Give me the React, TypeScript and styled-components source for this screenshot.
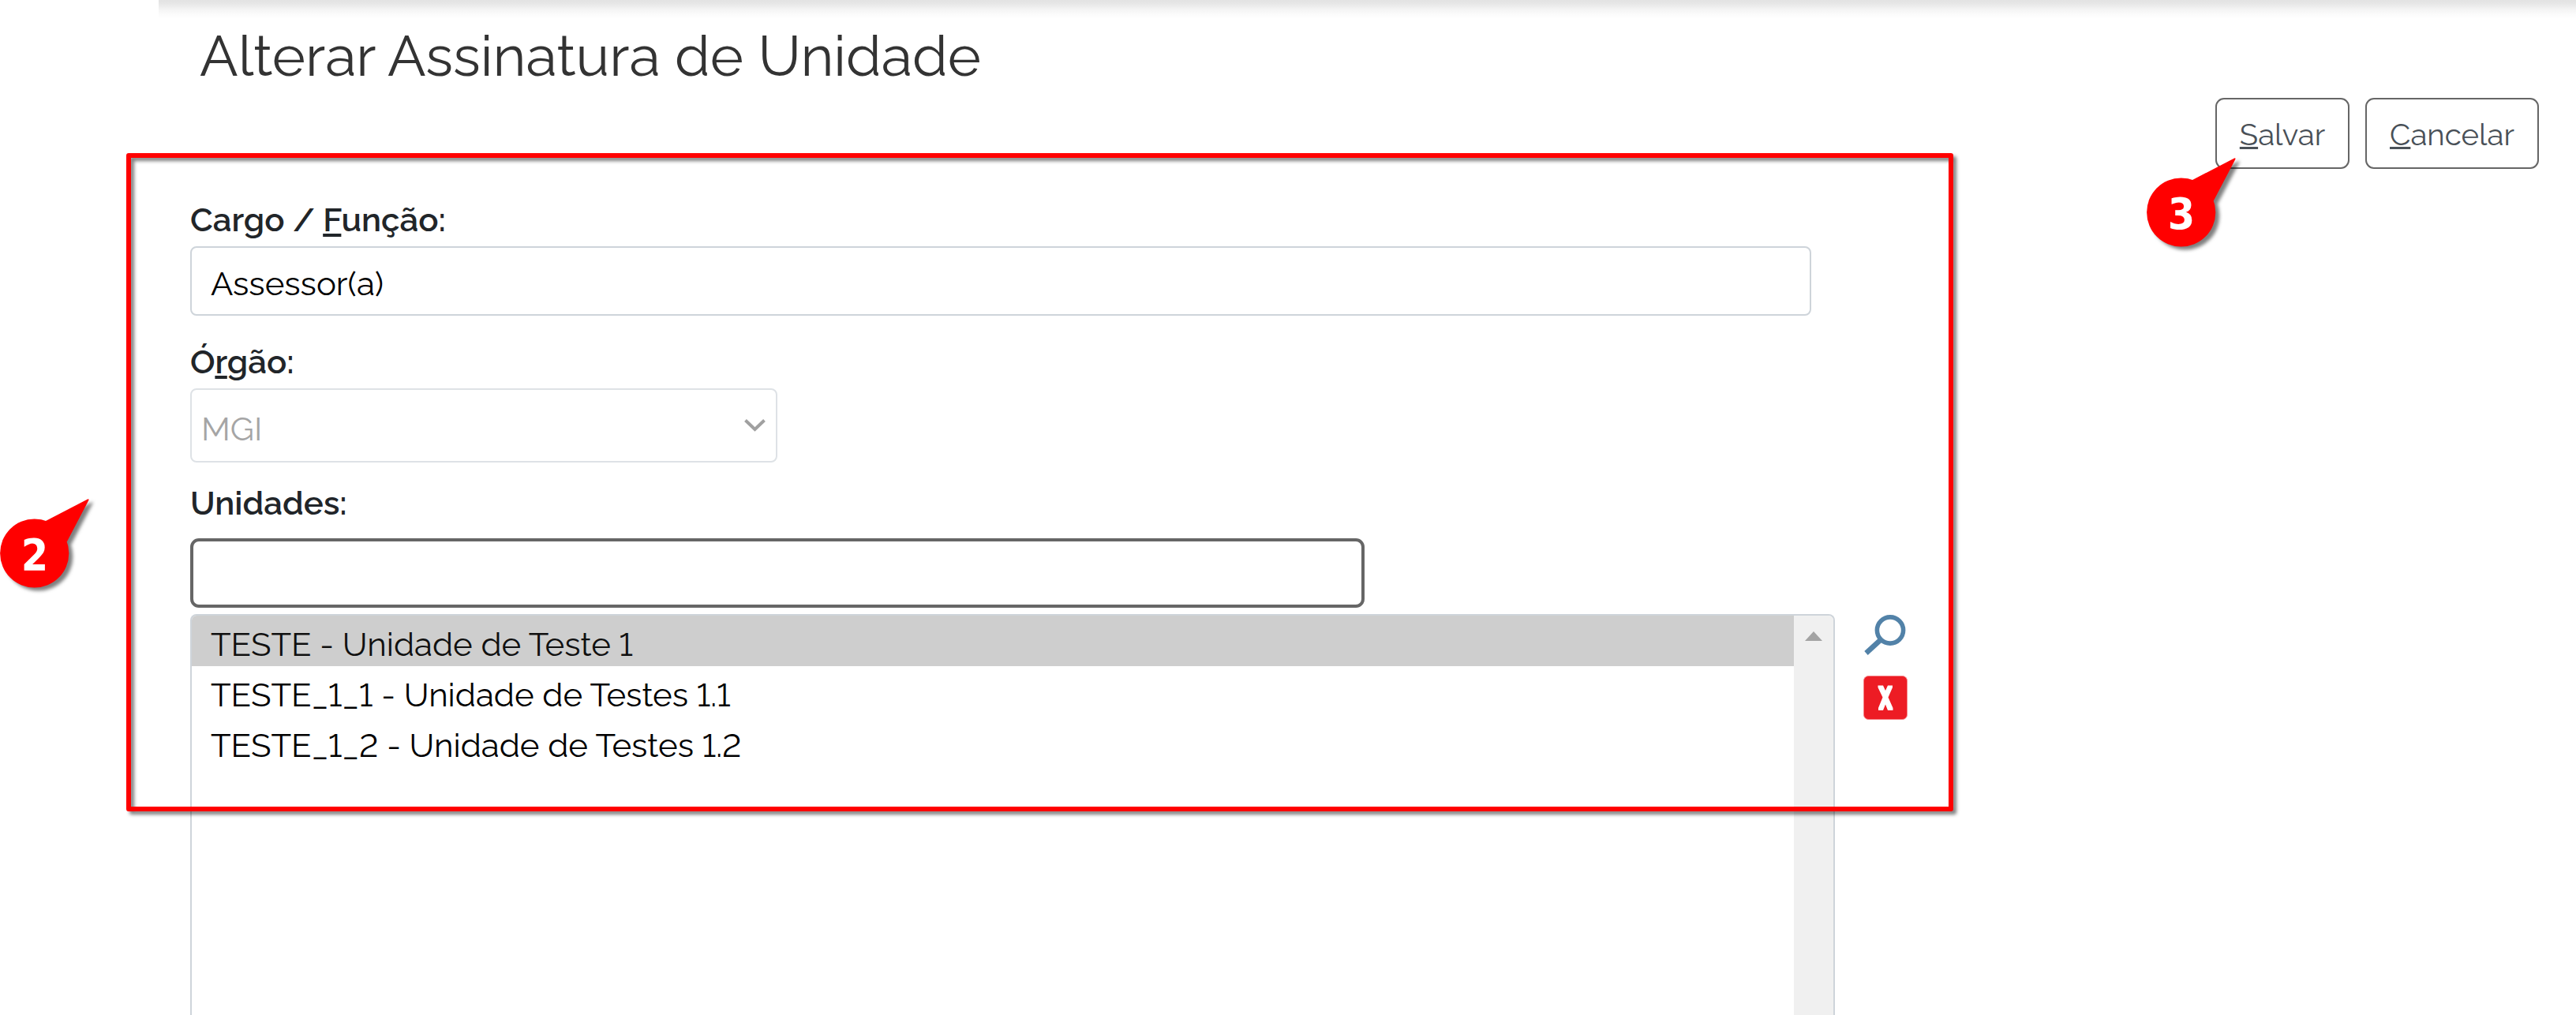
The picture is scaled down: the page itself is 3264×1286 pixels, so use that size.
import React from 'react';
import styled, { createGlobalStyle } from 'styled-components';

const GlobalStyle = createGlobalStyle`
  *, *::before, *::after { box-sizing: border-box; }
  body { margin: 0; background: #fff; }
`;

const Page = styled.main`
  position: relative;
  display: flex;
  flex-direction: column;
  width: 3264px;
  height: 1286px;
  overflow: hidden;
  background: #fff;
  font-family: Raleway, Lato, 'Open Sans', sans-serif;
  font-variant-numeric: lining-nums;
  color: #212529;
`;

const TopShadow = styled.div`
  flex: none;
  height: 24px;
  margin-left: 201px;
  background: linear-gradient(#e3e3e3 0, #e6e6e6 4px, #f4f4f4 12px, #fcfcfc 19px, #fff 24px);
`;

const Title = styled.h1`
  flex: none;
  margin: 5px 0 0 253px;
  font-size: 72px;
  font-weight: 400;
  line-height: 84px;
  white-space: nowrap;
  color: #333;
`;

const Actions = styled.div`
  flex: none;
  display: flex;
  justify-content: flex-end;
  gap: 20px;
  margin-top: 11px;
  padding-right: 47px;
`;

const ActionButton = styled.button<{ $width: number }>`
  width: ${p => p.$width}px;
  height: 90px;
  padding: 3px 0 0;
  border: 2px solid #666;
  border-radius: 11px;
  background: #fff;
  font-family: inherit;
  font-size: 38.4px;
  text-align: center;
  color: #495057;
`;

const Key = styled.span`
  text-decoration: underline;
  text-decoration-skip-ink: none;
`;

const Form = styled.form`
  flex: 1;
  min-height: 0;
  display: flex;
  flex-direction: column;
  padding: 40px 0 0 241px;
`;

const Field = styled.div<{ $after: number }>`
  display: flex;
  flex-direction: column;
  gap: 8px;
  margin-bottom: ${p => p.$after}px;
`;

const Label = styled.label`
  font-size: 42px;
  font-weight: 600;
  line-height: 50px;
  white-space: nowrap;
`;

const TextInput = styled.input`
  width: 2054px;
  height: 88px;
  padding: 6px 25px 0 24px;
  border: 2px solid #ced4da;
  border-radius: 8px;
  outline: none;
  background: #fff;
  font-family: inherit;
  font-size: 42px;
  color: #000;
`;

const SearchInput = styled(TextInput)`
  width: 1488px;
  margin-top: 11px;
  border: 4px solid #666;
  border-radius: 11px;
`;

const Select = styled.div`
  display: flex;
  align-items: center;
  justify-content: space-between;
  width: 744px;
  height: 94px;
  padding: 0 12px;
  border: 2px solid #dee2e6;
  border-radius: 8px;
  font-size: 42px;
  color: #a5a5a5;
`;

const SelectValue = styled.span`
  padding-top: 8px;
`;

const ListRow = styled.div`
  flex: 1;
  min-height: 0;
  display: flex;
  gap: 36px;
`;

const ListBox = styled.div`
  display: flex;
  width: 2084px;
  border: 2px solid #ced4da;
  border-bottom: 0;
  border-radius: 8px 8px 0 0;
  overflow: hidden;
`;

const Options = styled.ul`
  flex: 1;
  margin: 0;
  padding: 0;
  list-style: none;
`;

const Option = styled.li<{ $selected?: boolean }>`
  height: 64px;
  padding: 9px 0 0 24px;
  font-size: 42px;
  line-height: 56px;
  white-space: nowrap;
  color: ${p => (p.$selected ? '#101010' : '#000')};
  background: ${p => (p.$selected ? '#cecece' : 'transparent')};
`;

const Scrollbar = styled.div`
  display: flex;
  justify-content: center;
  width: 50px;
  padding-top: 20px;
  background: #f0f0f0;
`;

const ListTools = styled.div`
  display: flex;
  flex-direction: column;
  gap: 24px;
`;

const Frame = styled.div`
  position: absolute;
  left: 160px;
  top: 194px;
  width: 2315px;
  height: 834px;
  border: 6px solid #f00;
  border-radius: 3px;
  filter: drop-shadow(4px 4px 2px rgba(0, 0, 0, 0.5));
  pointer-events: none;
`;

const Callout = styled.div<{ $x: number; $y: number }>`
  position: absolute;
  left: ${p => p.$x}px;
  top: ${p => p.$y}px;
  width: 114px;
  height: 113px;
  filter: drop-shadow(5px 4px 2px rgba(0, 0, 0, 0.5));
`;

const CalloutNumber = styled.span`
  position: absolute;
  left: 0;
  top: 27px;
  width: 88px;
  font-family: Tahoma, 'DejaVu Sans Condensed', 'DejaVu Sans', sans-serif;
  font-stretch: condensed;
  font-size: 55px;
  font-weight: 700;
  line-height: 88px;
  text-align: center;
  color: #fff;
`;

function Pin({ x, y, children }: { x: number; y: number; children: React.ReactNode }) {
  return (
    <Callout $x={x} $y={y}>
      <svg width="114" height="113" viewBox="0 0 114 113">
        <circle cx="43.7" cy="69" r="43.6" fill="#f00" />
        <path d="M58 28 L111 0.4 Q113 0 112.4 1.8 L85 54 L50 66 Z" fill="#f00" />
      </svg>
      <CalloutNumber>{children}</CalloutNumber>
    </Callout>
  );
}

export default function App() {
  return (
    <Page>
      <GlobalStyle />
      <TopShadow />
      <Title>Alterar Assinatura de Unidade</Title>
      <Actions>
        <ActionButton type="button" $width={170}>
          <Key>S</Key>alvar
        </ActionButton>
        <ActionButton type="button" $width={220}>
          <Key>C</Key>ancelar
        </ActionButton>
      </Actions>
      <Form>
        <Field $after={34}>
          <Label>
            Cargo / <Key>F</Key>unção:
          </Label>
          <TextInput defaultValue="Assessor(a)" />
        </Field>
        <Field $after={27}>
          <Label>
            Ó<Key>r</Key>gão:
          </Label>
          <Select>
            <SelectValue>MGI</SelectValue>
            <svg width="29" height="18" viewBox="0 0 29 18">
              <path d="M2.5 2.5 L14.5 14 L26.5 2.5" fill="none" stroke="#a0a0a0" strokeWidth="4" />
            </svg>
          </Select>
        </Field>
        <Field $after={8}>
          <Label>Unidades:</Label>
          <SearchInput />
        </Field>
        <ListRow>
          <ListBox>
            <Options>
              <Option $selected>TESTE - Unidade de Teste 1</Option>
              <Option>TESTE_1_1 - Unidade de Testes 1.1</Option>
              <Option>TESTE_1_2 - Unidade de Testes 1.2</Option>
            </Options>
            <Scrollbar>
              <svg width="22" height="12" viewBox="0 0 22 12">
                <path d="M11 0 L22 12 H0 Z" fill="#a3a3a3" />
              </svg>
            </Scrollbar>
          </ListBox>
          <ListTools>
            <svg width="56" height="54" viewBox="0 0 56 54">
              <circle cx="34" cy="20.5" r="16.6" fill="none" stroke="#5282a8" strokeWidth="5.6" />
              <path d="M21.5 33 L3.5 49.5" stroke="#5282a8" strokeWidth="6.5" />
            </svg>
            <svg width="56" height="56" viewBox="0 0 56 56">
              <rect x="0.5" y="0.5" width="55" height="55" rx="6" fill="#ed1c24" stroke="#f58488" />
              <path
                d="M18.5 12.5 H25 L28 19 L31 12.5 H37 V15 L31.5 27.5 L37.5 41 V44 H31 L28 36.5 L25 44 H19 V41 L24.5 27.5 L18.5 15 Z"
                fill="#fff"
              />
            </svg>
          </ListTools>
        </ListRow>
      </Form>
      <Frame />
      <Pin x={0} y={632}>2</Pin>
      <Pin x={2720} y={200}>3</Pin>
    </Page>
  );
}
